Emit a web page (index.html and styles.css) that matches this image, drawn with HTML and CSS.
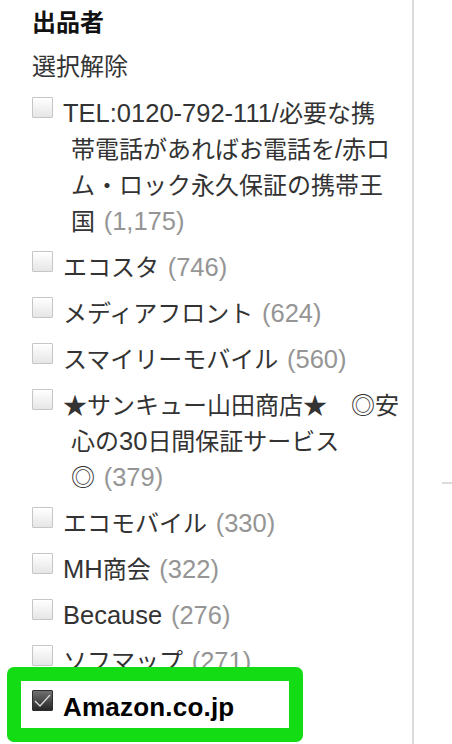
FILE: index.html
```html
<!DOCTYPE html>
<html lang="ja">
<head>
<meta charset="utf-8">
<title>出品者</title>
<link rel="stylesheet" href="styles.css">
</head>
<body>
<div class="layout">
  <aside class="refine">
    <h2 class="refine-title">出品者</h2>
    <a class="clear">選択解除</a>
    <ul class="sellers">
      <li class="seller"><span class="box"></span><span class="name"><span class="latin">TEL:0120-792-111/</span>必要な携<br>帯電話があればお電話を<span class="latin">/</span>赤ロ<br>ム・ロック永久保証の携帯王<br>国 <span class="count">(1,175)</span></span></li>
      <li class="seller"><span class="box"></span><span class="name">エコスタ <span class="count">(746)</span></span></li>
      <li class="seller"><span class="box"></span><span class="name">メディアフロント <span class="count">(624)</span></span></li>
      <li class="seller"><span class="box"></span><span class="name">スマイリーモバイル <span class="count">(560)</span></span></li>
      <li class="seller"><span class="box"></span><span class="name">★サンキュー山田商店★　◎安<br>心の<span class="latin">30</span>日間保証サービス<br>◎ <span class="count">(379)</span></span></li>
      <li class="seller"><span class="box"></span><span class="name">エコモバイル <span class="count">(330)</span></span></li>
      <li class="seller"><span class="box"></span><span class="name"><span class="latin">MH</span>商会 <span class="count">(322)</span></span></li>
      <li class="seller"><span class="box"></span><span class="name"><span class="latin">Because</span> <span class="count">(276)</span></span></li>
      <li class="seller"><span class="box"></span><span class="name">ソフマップ <span class="count">(271)</span></span></li>
      <li class="seller seller--selected"><span class="box box--checked"><svg width="21" height="21" viewBox="0 0 21 21"><path d="M3 11 L8 16 L18 5" fill="none" stroke="#d6d6d6" stroke-width="1.4"/></svg></span><span class="name">Amazon.co.jp</span></li>
    </ul>
  </aside>
  <main class="results"><div class="rule"></div></main>
</div>
</body>
</html>
```
FILE: styles.css
```css
html, body {
  margin: 0;
  height: 100%;
  overflow: hidden;
  background: #fff;
}
body {
  font-family: "Liberation Sans", "Noto Sans CJK JP", sans-serif;
  color: #333;
}
.layout {
  display: flex;
  height: 744px;
}
.refine {
  flex: none;
  width: 414px;
  box-sizing: border-box;
  padding: 5px 0 0 32px;
  border-right: 2px solid #dcdcdc;
}
.refine-title {
  margin: 0;
  font-size: 24px;
  font-weight: bold;
  line-height: 36px;
  color: #111;
}
.clear {
  display: block;
  margin-top: 8px;
  font-size: 24px;
  line-height: 36px;
  color: #333;
}
.sellers {
  list-style: none;
  margin: 11px 0 0;
  padding: 0;
  display: flex;
  flex-direction: column;
  gap: 10px;
}
.seller {
  display: flex;
  align-items: flex-start;
  gap: 10px;
  font-size: 24px;
  line-height: 36px;
  word-spacing: 2px;
}
.name {
  display: block;
  padding-left: 8px;
  text-indent: -8px;
}
.latin {
  font-size: 25.5px;
  line-height: 1;
}
.box {
  flex: none;
  display: block;
  width: 21px;
  height: 21px;
  margin-top: 1px;
  box-sizing: border-box;
  border: 1px solid #c6c6c6;
  border-radius: 1px;
  background: linear-gradient(#ffffff, #e6e6e6);
  box-shadow: inset 0 1px 0 #fff;
}
.box svg {
  display: block;
  margin: -1px;
}
.count {
  font-size: 25.5px;
  line-height: 1;
  color: #959595;
}
.seller--selected {
  position: relative;
  z-index: 1;
  align-self: flex-start;
  width: 296px;
  box-sizing: border-box;
  margin: -23px 0 0 -25px;
  padding: 8px 0 3px 11px;
  border: 14px solid #14dc14;
  border-radius: 7px;
  background: #fff;
}
.seller--selected .name {
  font-size: 26px;
  font-weight: bold;
  color: #000;
  letter-spacing: 0.2px;
}
.box--checked {
  border-color: #2e2e2e;
  background: linear-gradient(#707070, #262626);
  box-shadow: none;
}
.results {
  flex: 1;
  padding: 482px 0 0 28px;
}
.rule {
  height: 2px;
  background: #dcdcdc;
}
```
